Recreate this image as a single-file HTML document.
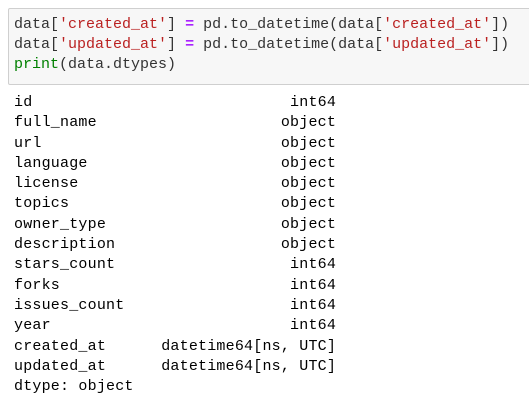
<!DOCTYPE html>
<html><head><style>
body{margin:0;background:#fff;width:529px;height:406px;overflow:hidden;font-family:"Liberation Mono",monospace;font-size:15px;color:#333}
.in{position:absolute;left:8px;top:8px;width:530px;height:75px;background:#f7f7f7;border:1px solid #cfcfcf;border-radius:2px}
pre{margin:0;font-family:inherit;font-size:15px;line-height:20px;white-space:pre}
.code{position:absolute;left:14px;top:15px}
.out{position:absolute;left:14px;top:93px;line-height:20.3px;letter-spacing:0.2px;color:#000}
.s{color:#ba2121}.o{color:#aa22ff;font-weight:bold}.b{color:#008000}
</style></head><body>
<div class="in"></div>
<pre class="code">data[<span class="s">'created_at'</span>] <span class="o">=</span> pd.to_datetime(data[<span class="s">'created_at'</span>])
data[<span class="s">'updated_at'</span>] <span class="o">=</span> pd.to_datetime(data[<span class="s">'updated_at'</span>])
<span class="b">print</span>(data.dtypes)</pre>
<pre class="out">id                            int64
full_name                    object
url                          object
language                     object
license                      object
topics                       object
owner_type                   object
description                  object
stars_count                   int64
forks                         int64
issues_count                  int64
year                          int64
created_at      datetime64[ns, UTC]
updated_at      datetime64[ns, UTC]
dtype: object</pre>
</body></html>
